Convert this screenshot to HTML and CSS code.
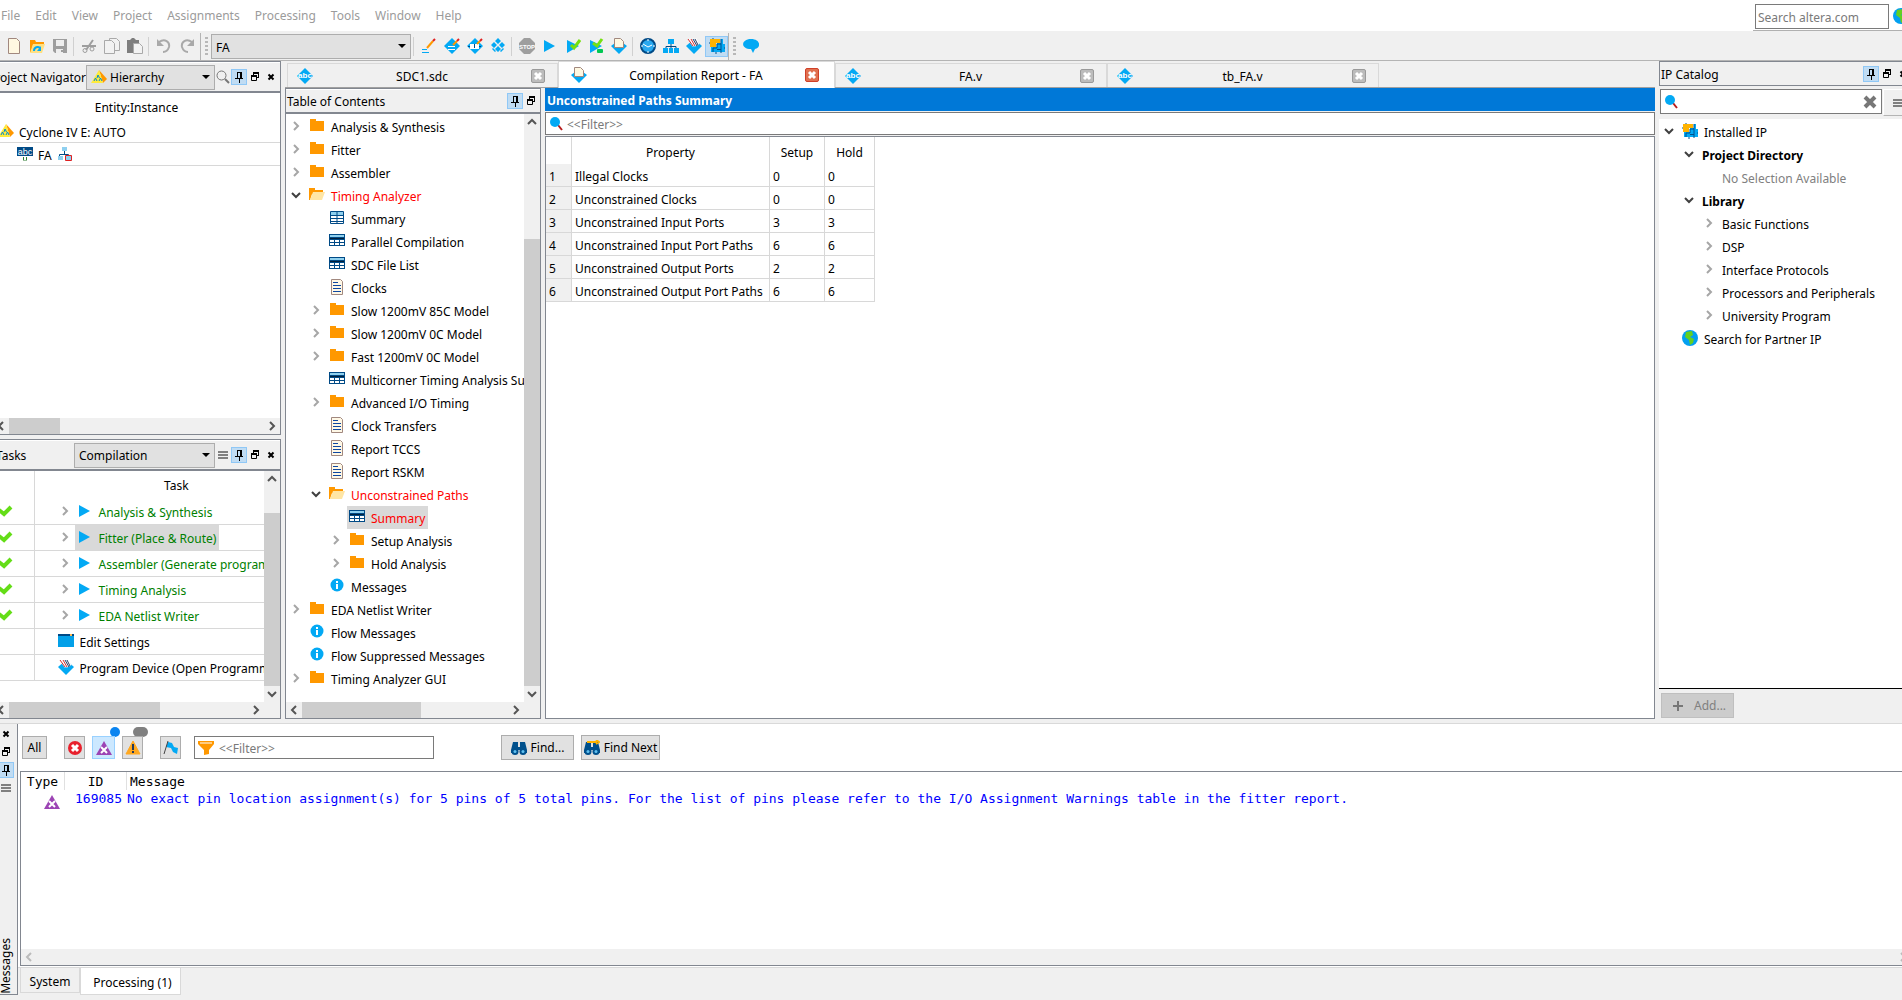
FILE: index.html
```
<!DOCTYPE html>
<html lang="en">
  <head>
    <meta charset="utf-8">
    <title>Quartus Prime - FA</title>
    <link rel="stylesheet" href="styles.css">
  </head>
  <body>
    <!-- icon set -->
    <svg class="sprite" aria-hidden="true">
      <symbol id="chev-r" viewBox="0 0 16 16"><path d="M6 4l4 4-4 4" fill="none" stroke="currentColor" stroke-width="2"/></symbol>
      <symbol id="chev-l" viewBox="0 0 16 16"><path d="M10 4L6 8l4 4" fill="none" stroke="currentColor" stroke-width="2"/></symbol>
      <symbol id="chev-d" viewBox="0 0 16 16"><path d="M4 6l4 4 4-4" fill="none" stroke="currentColor" stroke-width="2"/></symbol>
      <symbol id="chev-u" viewBox="0 0 16 16"><path d="M4 10l4-4 4 4" fill="none" stroke="currentColor" stroke-width="2"/></symbol>
      <symbol id="folder" viewBox="0 0 16 16"><path d="M1 1h6v2h8v10H1z" fill="#ff9800"/></symbol>
      <symbol id="folder-open" viewBox="0 0 16 16"><path d="M0 1h6v2h8v4H3l-2 6H0z" fill="#ff9800"/><path d="M4 5h12l-3 8H1z" fill="#ffe6a5"/></symbol>
      <symbol id="grid" viewBox="0 0 16 16"><path d="M1 2h14v12H1z" fill="#fff"/><path d="M1 2h14v3H1z" fill="#8fd0ee"/><path d="M1.500 1.500h13v12h-13zM1 5.500h14M1 8.500h14M1 11.500h14M8 2v12" fill="none" stroke="#004a86"/></symbol>
      <symbol id="grid-head" viewBox="0 0 16 16"><path d="M0 1h16v12H0z" fill="#004a86"/><path d="M1 2h14v2H1z" fill="#8fd0ee"/><path d="M1 5h14v1H1z" fill="#00203c"/><path d="M1 7h4v2H1zM6 7h4v2H6zM11 7h4v2h-4zM1 10h4v2H1zM6 10h4v2H6zM11 10h4v2h-4z" fill="#fff"/></symbol>
      <symbol id="doc" viewBox="0 0 16 16"><path d="M2.500.5h9l2 2v13h-11z" fill="#fff8e6" stroke="#a1887f"/><path d="M4 3.500h5M4 6.500h8M4 9.500h8M4 12.500h8" stroke="#0d47a1"/></symbol>
      <symbol id="info" viewBox="0 0 16 16"><circle cx="8" cy="7" r="6.500" fill="#03a9f4"/><path d="M7 3h2v2H7zM7 6h2v5H7z" fill="#fff"/></symbol>
      <symbol id="pin" viewBox="0 0 16 16"><path d="M6.500 3v6M6 3.500h4M9.500 3v6M10.500 3v6M4 9.500h8M8.500 10v4" fill="none" stroke="#000"/></symbol>
      <symbol id="restore" viewBox="0 0 16 16"><path d="M6.500 7V4M12 8.500h-2M11.500 3v6" fill="none" stroke="#000"/><path d="M6 3h6v2H6zM4 6h6v2H4z" fill="#000"/><path d="M4.500 7v4.500h5V7" fill="none" stroke="#000"/></symbol>
      <symbol id="close" viewBox="0 0 16 16"><path d="M5.500 5.500l5 5M10.500 5.500l-5 5" stroke="#000" stroke-width="2"/></symbol>
      <symbol id="lines" viewBox="0 0 16 16"><path d="M3 5h10M3 8h10M3 11h10" stroke="#808080" stroke-width="2"/></symbol>
      <symbol id="lens" viewBox="0 0 16 16"><circle cx="6.500" cy="6.500" r="4.500" fill="none" stroke="#777"/><path d="M10 10l4 4" stroke="#777" stroke-width="2"/></symbol>
      <symbol id="lens-blue" viewBox="0 0 16 16"><path d="M9 9l4 5" stroke="#b71c1c" stroke-width="2"/><circle cx="6" cy="6" r="5" fill="#03a9f4"/></symbol>
      <symbol id="project" viewBox="0 0 16 16"><path d="M8 1l8 9-4 4z" fill="#ff9800"/><path d="M8 1l4 13H0z" fill="#ffeb3b"/><path d="M3 12l1.500-3L6 12M6 9l1-3 1.500 3M8 12l1.500-3 1.500 3" fill="none" stroke="#0288d1"/></symbol>
      <symbol id="abc" viewBox="0 0 16 16"><path d="M0 1h16v9H0z" fill="#004a86"/><text x="8" y="9" font-family="Liberation Sans" font-size="9" text-anchor="middle" fill="#fff">abc</text><path d="M6.500 11v3l1 1M9.500 11v3l-1 1" fill="none" stroke="#2e7d32"/></symbol>
      <symbol id="hier" viewBox="0 0 16 16"><path d="M7.500 5v3M2.500 10V8.500h9V9" fill="none" stroke="#004a86"/><path d="M5 1h5v4H5zM1 10h5v4H1z" fill="#8fd0f0"/><path d="M8.500 9.500h6v5h-6z" fill="#8fd0f0" stroke="#e02020"/></symbol>
      <symbol id="play" viewBox="0 0 16 16"><path d="M2 2l11 6-11 6z" fill="#03a9f4"/></symbol>
      <symbol id="check" viewBox="0 0 16 16"><path d="M1 7l5 4 7-7" fill="none" stroke="#64dd17" stroke-width="4"/></symbol>
      <symbol id="window" viewBox="0 0 16 16"><path d="M0 1h16v13H0z" fill="#03a0e8"/><path d="M0 1h16v2H0z" fill="#004a86"/><path d="M12 1h2v2h-2z" fill="#ffb74d"/></symbol>
      <symbol id="programmer" viewBox="0 0 16 16"><path d="M8 1l8 7-8 8-8-8z" fill="#03a9f4"/><path d="M3 1l5 7M6 1l4 7M9 1l3 6" stroke="#fff" stroke-width="3"/><path d="M2 1l5 7M5 1l4 7" stroke="#d32f2f"/><path d="M7 1l4 7M9 1l3 6" stroke="#263c66"/></symbol>
      <symbol id="new" viewBox="0 0 16 16"><path d="M2.500.5h8l3 3v12h-11z" fill="#fff8e1" stroke="#a1887f"/></symbol>
      <symbol id="open" viewBox="0 0 16 16"><path d="M1 2h5l1 2h8v3H4l-2 7H1z" fill="#ff9800"/><path d="M4 6h12l-3 9H1z" fill="#ffe082"/><path d="M5 13c0-4 4-5 6-3" fill="none" stroke="#03a9f4" stroke-width="2"/><path d="M12 8v5H8z" fill="#03a9f4"/></symbol>
      <symbol id="save" viewBox="0 0 16 16"><path d="M1 1h14v14H3l-2-2z" fill="#9e9e9e"/><path d="M4 2h8v6H4zM4 11h7v4H4z" fill="#eee"/><path d="M9 12h2v2H9z" fill="#9e9e9e"/></symbol>
      <symbol id="cut" viewBox="0 0 16 16"><path d="M1 8h14M5 12l7-10" stroke="#9e9e9e" stroke-width="2"/><circle cx="4" cy="12.500" r="2" fill="none" stroke="#9e9e9e"/><circle cx="11" cy="11" r="2" fill="none" stroke="#9e9e9e"/></symbol>
      <symbol id="copy" viewBox="0 0 16 16"><path d="M5.500.5h7l3 3v9h-10z" fill="#f2f2f2" stroke="#a9a9a9"/><path d="M.5 2.500h7l3 3v10H.5z" fill="#f2f2f2" stroke="#a9a9a9"/></symbol>
      <symbol id="paste" viewBox="0 0 16 16"><path d="M0 2h3l2-2h2l2 2h3v13H0z" fill="#7d7d7d"/><path d="M6.500 5.500h6l3 3v7h-9z" fill="#f2f2f2" stroke="#a9a9a9"/></symbol>
      <symbol id="undo" viewBox="0 0 16 16"><path d="M3 4c6-4 11 0 10 5-1 3-3 5-6 5" fill="none" stroke="#a9a9a9" stroke-width="2"/><path d="M1 1v7h7z" fill="#a9a9a9"/></symbol>
      <symbol id="redo" viewBox="0 0 16 16"><path d="M13 4C7 0 2 4 3 9c1 3 3 5 6 5" fill="none" stroke="#a9a9a9" stroke-width="2"/><path d="M15 1v7H8z" fill="#a9a9a9"/></symbol>
      <symbol id="pencil" viewBox="0 0 16 16"><path d="M6 10l6-7" stroke="#ff9800" stroke-width="2"/><path d="M12 3l2-2" stroke="#e02020" stroke-width="2"/><path d="M1 11.500h5M1 14.500h7" stroke="#03a9f4"/></symbol>
      <symbol id="assign" viewBox="0 0 16 16"><path d="M8 0l8 8-8 8-8-8z" fill="#03a9f4"/><path d="M4 8.500h7M4 11.500h7" stroke="#fff"/><path d="M9 7l4-4" stroke="#ff9800" stroke-width="2"/><path d="M13 3l2-2" stroke="#e02020" stroke-width="2"/></symbol>
      <symbol id="pins" viewBox="0 0 16 16"><path d="M8 0l8 8-8 8-8-8z" fill="#03a9f4"/><path d="M3 6h9v5H3z" fill="#fff"/><path d="M7.500 6v4M1 8.500h2M12 8.500h2" stroke="#004a86"/><path d="M10 6l3-3" stroke="#ff9800" stroke-width="2"/><path d="M13 3l2-2" stroke="#e02020" stroke-width="2"/></symbol>
      <symbol id="chips" viewBox="0 0 16 16"><path d="M8 0l3 3-3 3-3-3zM4 4l3 3-3 3-3-3zM12 4l3 3-3 3-3-3zM8 8l3 3-3 3-3-3zM3 10l3 3-1 1-3-3zM13 10l1 1-3 3-1-1z" fill="#03a9f4"/></symbol>
      <symbol id="stop" viewBox="0 0 16 16"><path d="M5 0h6l5 5v6l-5 5H5l-5-5V5z" fill="#9e9e9e"/><text x="8" y="11" font-family="Liberation Sans" font-size="6" font-weight="bold" text-anchor="middle" fill="#fff">STOP</text></symbol>
      <symbol id="play-check" viewBox="0 0 16 16"><path d="M2 2l12 6-12 7z" fill="#03a9f4"/><path d="M6 7l3 3 6-8" fill="none" stroke="#76e010" stroke-width="3"/></symbol>
      <symbol id="play-chip" viewBox="0 0 16 16"><path d="M2 2l12 6-12 7z" fill="#03a9f4"/><path d="M5 5l4 3 5-7" fill="none" stroke="#76e010" stroke-width="3"/><rect x="9" y="11" width="6" height="4" rx="1" fill="#00c853"/></symbol>
      <symbol id="report" viewBox="0 0 16 16"><path d="M0 8l4-3h8l4 3-8 8z" fill="#03a9f4"/><path d="M3.500.5h6l3 3v6h-9z" fill="#fff8e1" stroke="#a1887f"/></symbol>
      <symbol id="clock" viewBox="0 0 16 16"><circle cx="8" cy="8" r="7" fill="#29a9f0" stroke="#004a86" stroke-width="2"/><path d="M3 6l5 3 4-2" fill="none" stroke="#fff"/><path d="M8 1v2M8 13v2M1 8h2M13 8h2" stroke="#fff"/></symbol>
      <symbol id="tree" viewBox="0 0 16 16"><path d="M8 6v4M3 11V8.500h10V11" fill="none" stroke="#004a86"/><path d="M5 1h6v5H5zM0 10h5v5H0zM6 10h4v5H6zM11 10h5v5h-5z" fill="#03a9f4"/></symbol>
      <symbol id="chip" viewBox="0 0 16 16"><path d="M12 1h2v5h2v8H2v-5h6V5h4z" fill="#03a9f4"/><path d="M1 1h10v4H7v4H1z" fill="#ffb300"/><path d="M4 14v-4h4V6h4V1M12 6v9M8 11.500h4M4 0v1M0 5h1M7 14v2M15 10h1" fill="none" stroke="#00508c"/></symbol>
      <symbol id="bubble" viewBox="0 0 16 16"><path d="M8 1c10 0 10 9 4 10l-2 4-2-4C-3 11-2 1 8 1z" fill="#03a9f4"/></symbol>
      <symbol id="globe" viewBox="0 0 16 16"><circle cx="8" cy="8" r="8" fill="#03a0f0"/><path d="M4 2l6-1 1 4-3 2 4 2-1 4-3 2-1-5-4-3z" fill="#64d020"/></symbol>
      <symbol id="diamond-abc" viewBox="0 0 16 16"><path d="M8 0l8 8-8 8-8-8z" fill="#03a9f4"/><text x="8" y="10" font-family="Liberation Sans" font-size="8" font-weight="bold" text-anchor="middle" fill="#fff">abc</text></symbol>
      <symbol id="error" viewBox="0 0 16 16"><circle cx="8" cy="8" r="7" fill="#e8202c"/><path d="M5 5l6 6M11 5l-6 6" stroke="#fff" stroke-width="3"/></symbol>
      <symbol id="critical" viewBox="0 0 16 16"><path d="M8 1l8 14H0z" fill="#9c44b4"/><path d="M5 7l6 6M11 7l-6 6" stroke="#fff" stroke-width="2"/></symbol>
      <symbol id="warning" viewBox="0 0 16 16"><path d="M8 1l7 13H1z" fill="#ffa820" stroke="#ffa820" stroke-linejoin="round"/><path d="M7 4h2v6H7zM7 11h2v2H7z" fill="#223a5e"/></symbol>
      <symbol id="flag" viewBox="0 0 16 16"><path d="M5 2l4 1 2 4 4 1-1 6-4-2-2-4-5-1z" fill="#03a9f4"/><path d="M5 1L1 14" stroke="#444"/></symbol>
      <symbol id="funnel" viewBox="0 0 16 16"><path d="M0 1h16v3l-5 6v4l-5 1v-5L0 4z" fill="#ff9800"/><path d="M2 3h12" stroke="#fff"/></symbol>
      <symbol id="binoc" viewBox="0 0 16 16"><path d="M2 2h5v5h2V2h5l2 8v3h-6v-3H6v3H0v-3z" fill="#00508c"/><circle cx="4" cy="11.500" r="3.500" fill="#00508c"/><circle cx="12" cy="11.500" r="3.500" fill="#00508c"/><circle cx="4" cy="11.500" r="1.500" fill="#5fc0f0"/><circle cx="12" cy="11.500" r="1.500" fill="#5fc0f0"/></symbol>
      <symbol id="binoc-next" viewBox="0 0 16 16"><use href="#binoc"/><path d="M3 2h10M12 0l3 2-3 2" fill="none" stroke="#ffb300" stroke-width="2"/></symbol>
      <symbol id="tab-x" viewBox="0 0 16 16"><path d="M4 4l8 8M12 4l-8 8" stroke="#fff" stroke-width="4"/></symbol>
      <symbol id="clear" viewBox="0 0 16 16"><path d="M3 3l10 10M13 3L3 13" stroke="#777" stroke-width="4"/></symbol>
      <symbol id="plus" viewBox="0 0 16 16"><path d="M8 3v10M3 8h10" stroke="#777" stroke-width="2"/></symbol>
    </svg>

    <div class="app">
      <div class="menubar">
        <nav class="menu">
          <a href="#">File</a><a href="#">Edit</a><a href="#">View</a><a href="#">Project</a><a href="#">Assignments</a><a href="#">Processing</a><a href="#">Tools</a><a href="#">Window</a><a href="#">Help</a>
        </nav>
        <div class="site-search">
          <input type="text" placeholder="Search altera.com" aria-label="Search altera.com">
          <button class="tool" aria-label="Search the web"><svg><use href="#globe"/></svg></button>
        </div>
      </div>

      <div class="toolbar">
        <div class="tools tools-file">
          <button class="tool" aria-label="New"><svg><use href="#new"/></svg></button>
          <button class="tool" aria-label="Open"><svg><use href="#open"/></svg></button>
          <button class="tool" aria-label="Save"><svg><use href="#save"/></svg></button>
          <span class="sep"></span>
          <button class="tool" aria-label="Cut"><svg><use href="#cut"/></svg></button>
          <button class="tool" aria-label="Copy"><svg><use href="#copy"/></svg></button>
          <button class="tool" aria-label="Paste"><svg><use href="#paste"/></svg></button>
          <span class="sep"></span>
          <button class="tool" aria-label="Undo"><svg><use href="#undo"/></svg></button>
          <button class="tool" aria-label="Redo"><svg><use href="#redo"/></svg></button>
        </div>
        <div class="tools">
          <span class="grip"></span>
          <div class="combo combo-revision"><select aria-label="Revision"><option>FA</option></select></div>
          <span class="sep"></span>
          <button class="tool" aria-label="Settings"><svg><use href="#pencil"/></svg></button>
          <button class="tool" aria-label="Assignment Editor"><svg><use href="#assign"/></svg></button>
          <button class="tool" aria-label="Pin Planner"><svg><use href="#pins"/></svg></button>
          <button class="tool" aria-label="Chip Planner"><svg><use href="#chips"/></svg></button>
          <span class="sep"></span>
          <button class="tool" aria-label="Stop"><svg><use href="#stop"/></svg></button>
          <button class="tool" aria-label="Start Compilation"><svg><use href="#play"/></svg></button>
          <button class="tool" aria-label="Start Analysis"><svg><use href="#play-check"/></svg></button>
          <button class="tool" aria-label="Start I/O Analysis"><svg><use href="#play-chip"/></svg></button>
          <button class="tool" aria-label="Report"><svg><use href="#report"/></svg></button>
          <span class="sep"></span>
          <button class="tool" aria-label="Timing Analyzer"><svg><use href="#clock"/></svg></button>
          <button class="tool" aria-label="Netlist"><svg><use href="#tree"/></svg></button>
          <button class="tool" aria-label="Programmer"><svg><use href="#programmer"/></svg></button>
          <button class="tool pressed" aria-label="IP Catalog"><svg><use href="#chip"/></svg></button>
        </div>
        <div class="tools tools-last">
          <span class="grip"></span>
          <button class="tool" aria-label="Feedback"><svg><use href="#bubble"/></svg></button>
        </div>
      </div>

      <div class="main">
        <div class="side">
          <section class="panel navigator">
            <header class="panel-head tall">
              <label for="nav-view">Project Navigator</label>
              <div class="combo combo-nav"><svg><use href="#project"/></svg><select id="nav-view"><option>Hierarchy</option></select></div>
              <button class="mini" aria-label="Find"><svg><use href="#lens"/></svg></button>
              <button class="mini pressed" aria-label="Pin"><svg><use href="#pin"/></svg></button>
              <button class="mini" aria-label="Float"><svg><use href="#restore"/></svg></button>
              <button class="mini" aria-label="Close"><svg><use href="#close"/></svg></button>
            </header>
            <div class="col-head">Entity:Instance</div>
            <div class="entity"><svg><use href="#project"/></svg>Cyclone IV E: AUTO</div>
            <div class="entity child"><svg><use href="#abc"/></svg>FA<svg><use href="#hier"/></svg></div>
            <div class="fill"></div>
            <div class="hbar"><svg><use href="#chev-l"/></svg><div class="track"><div class="thumb" style="width: 20%"></div></div><svg><use href="#chev-r"/></svg></div>
          </section>

          <section class="panel tasks">
            <header class="panel-head tall">
              <label for="task-flow">Tasks</label>
              <div class="combo combo-flow"><select id="task-flow"><option>Compilation</option></select></div>
              <button class="mini" aria-label="Menu"><svg><use href="#lines"/></svg></button>
              <button class="mini pressed" aria-label="Pin"><svg><use href="#pin"/></svg></button>
              <button class="mini" aria-label="Float"><svg><use href="#restore"/></svg></button>
              <button class="mini" aria-label="Close"><svg><use href="#close"/></svg></button>
            </header>
            <div class="scroller">
              <div class="view">
                <table class="task-table">
                  <tr><th class="status"></th><th>Task</th></tr>
                  <tr><td class="status"><svg><use href="#check"/></svg></td><td><div class="task"><button class="twist" aria-label="Expand"><svg><use href="#chev-r"/></svg></button><span class="pick"><svg><use href="#play"/></svg>Analysis &amp; Synthesis</span></div></td></tr>
                  <tr><td class="status"><svg><use href="#check"/></svg></td><td><div class="task"><button class="twist" aria-label="Expand"><svg><use href="#chev-r"/></svg></button><span class="pick selected"><svg><use href="#play"/></svg>Fitter (Place &amp; Route)</span></div></td></tr>
                  <tr><td class="status"><svg><use href="#check"/></svg></td><td><div class="task"><button class="twist" aria-label="Expand"><svg><use href="#chev-r"/></svg></button><span class="pick"><svg><use href="#play"/></svg>Assembler (Generate programming files)</span></div></td></tr>
                  <tr><td class="status"><svg><use href="#check"/></svg></td><td><div class="task"><button class="twist" aria-label="Expand"><svg><use href="#chev-r"/></svg></button><span class="pick"><svg><use href="#play"/></svg>Timing Analysis</span></div></td></tr>
                  <tr><td class="status"><svg><use href="#check"/></svg></td><td><div class="task"><button class="twist" aria-label="Expand"><svg><use href="#chev-r"/></svg></button><span class="pick"><svg><use href="#play"/></svg>EDA Netlist Writer</span></div></td></tr>
                  <tr><td class="status"></td><td><div class="task plain"><span class="pick"><svg><use href="#window"/></svg>Edit Settings</span></div></td></tr>
                  <tr><td class="status"></td><td><div class="task plain"><span class="pick"><svg><use href="#programmer"/></svg>Program Device (Open Programmer)</span></div></td></tr>
                </table>
              </div>
              <div class="vbar"><svg><use href="#chev-u"/></svg><div class="track"><div class="thumb" style="margin-top: 26px"></div></div><svg><use href="#chev-d"/></svg></div>
            </div>
            <div class="hbar corner"><svg><use href="#chev-l"/></svg><div class="track"><div class="thumb" style="width: 63%"></div></div><svg><use href="#chev-r"/></svg></div>
          </section>
        </div>

        <div class="workspace">
          <div class="tabs">
            <div class="tab"><svg><use href="#diamond-abc"/></svg><span>SDC1.sdc</span><button class="tab-close" aria-label="Close tab"><svg><use href="#tab-x"/></svg></button></div>
            <div class="tab active"><svg><use href="#report"/></svg><span>Compilation Report - FA</span><button class="tab-close" aria-label="Close tab"><svg><use href="#tab-x"/></svg></button></div>
            <div class="tab"><svg><use href="#diamond-abc"/></svg><span>FA.v</span><button class="tab-close" aria-label="Close tab"><svg><use href="#tab-x"/></svg></button></div>
            <div class="tab"><svg><use href="#diamond-abc"/></svg><span>tb_FA.v</span><button class="tab-close" aria-label="Close tab"><svg><use href="#tab-x"/></svg></button></div>
          </div>

          <div class="report">
            <section class="panel toc">
              <header class="panel-head">
                <span class="title">Table of Contents</span>
                <button class="mini pressed" aria-label="Pin"><svg><use href="#pin"/></svg></button>
                <button class="mini" aria-label="Float"><svg><use href="#restore"/></svg></button>
              </header>
              <div class="scroller">
                <div class="view">
                  <ul class="tree">
                    <li><button class="twist" aria-label="Expand"><svg><use href="#chev-r"/></svg></button><span class="item"><svg><use href="#folder"/></svg>Analysis &amp; Synthesis</span></li>
                    <li><button class="twist" aria-label="Expand"><svg><use href="#chev-r"/></svg></button><span class="item"><svg><use href="#folder"/></svg>Fitter</span></li>
                    <li><button class="twist" aria-label="Expand"><svg><use href="#chev-r"/></svg></button><span class="item"><svg><use href="#folder"/></svg>Assembler</span></li>
                    <li><button class="twist open" aria-label="Collapse"><svg><use href="#chev-d"/></svg></button><span class="item alert"><svg><use href="#folder-open"/></svg>Timing Analyzer</span></li>
                    <li class="l1 leaf"><span class="item"><svg><use href="#grid"/></svg>Summary</span></li>
                    <li class="l1 leaf"><span class="item"><svg><use href="#grid-head"/></svg>Parallel Compilation</span></li>
                    <li class="l1 leaf"><span class="item"><svg><use href="#grid-head"/></svg>SDC File List</span></li>
                    <li class="l1 leaf"><span class="item"><svg><use href="#doc"/></svg>Clocks</span></li>
                    <li class="l1"><button class="twist" aria-label="Expand"><svg><use href="#chev-r"/></svg></button><span class="item"><svg><use href="#folder"/></svg>Slow 1200mV 85C Model</span></li>
                    <li class="l1"><button class="twist" aria-label="Expand"><svg><use href="#chev-r"/></svg></button><span class="item"><svg><use href="#folder"/></svg>Slow 1200mV 0C Model</span></li>
                    <li class="l1"><button class="twist" aria-label="Expand"><svg><use href="#chev-r"/></svg></button><span class="item"><svg><use href="#folder"/></svg>Fast 1200mV 0C Model</span></li>
                    <li class="l1 leaf"><span class="item"><svg><use href="#grid-head"/></svg>Multicorner Timing Analysis Summary</span></li>
                    <li class="l1"><button class="twist" aria-label="Expand"><svg><use href="#chev-r"/></svg></button><span class="item"><svg><use href="#folder"/></svg>Advanced I/O Timing</span></li>
                    <li class="l1 leaf"><span class="item"><svg><use href="#doc"/></svg>Clock Transfers</span></li>
                    <li class="l1 leaf"><span class="item"><svg><use href="#doc"/></svg>Report TCCS</span></li>
                    <li class="l1 leaf"><span class="item"><svg><use href="#doc"/></svg>Report RSKM</span></li>
                    <li class="l1"><button class="twist open" aria-label="Collapse"><svg><use href="#chev-d"/></svg></button><span class="item alert"><svg><use href="#folder-open"/></svg>Unconstrained Paths</span></li>
                    <li class="l2 leaf"><span class="item alert selected"><svg><use href="#grid-head"/></svg>Summary</span></li>
                    <li class="l2"><button class="twist" aria-label="Expand"><svg><use href="#chev-r"/></svg></button><span class="item"><svg><use href="#folder"/></svg>Setup Analysis</span></li>
                    <li class="l2"><button class="twist" aria-label="Expand"><svg><use href="#chev-r"/></svg></button><span class="item"><svg><use href="#folder"/></svg>Hold Analysis</span></li>
                    <li class="l1 leaf"><span class="item"><svg><use href="#info"/></svg>Messages</span></li>
                    <li><button class="twist" aria-label="Expand"><svg><use href="#chev-r"/></svg></button><span class="item"><svg><use href="#folder"/></svg>EDA Netlist Writer</span></li>
                    <li class="leaf"><span class="item"><svg><use href="#info"/></svg>Flow Messages</span></li>
                    <li class="leaf"><span class="item"><svg><use href="#info"/></svg>Flow Suppressed Messages</span></li>
                    <li><button class="twist" aria-label="Expand"><svg><use href="#chev-r"/></svg></button><span class="item"><svg><use href="#folder"/></svg>Timing Analyzer GUI</span></li>
                  </ul>
                </div>
                <div class="vbar"><svg><use href="#chev-u"/></svg><div class="track"><div class="thumb" style="margin-top: 109px"></div></div><svg><use href="#chev-d"/></svg></div>
              </div>
              <div class="hbar corner"><svg><use href="#chev-l"/></svg><div class="track"><div class="thumb" style="width: 58%"></div></div><svg><use href="#chev-r"/></svg></div>
            </section>

            <section class="summary">
              <h2>Unconstrained Paths Summary</h2>
              <div class="filter"><svg><use href="#lens-blue"/></svg><input type="text" placeholder="&lt;&lt;Filter&gt;&gt;" aria-label="Filter report"></div>
              <div class="sheet">
                <table class="paths">
                  <thead>
                    <tr><th class="num"></th><th class="prop">Property</th><th class="setup">Setup</th><th class="hold">Hold</th></tr>
                  </thead>
                  <tbody>
                    <tr><td class="num">1</td><td>Illegal Clocks</td><td>0</td><td>0</td></tr>
                    <tr><td class="num">2</td><td>Unconstrained Clocks</td><td>0</td><td>0</td></tr>
                    <tr><td class="num">3</td><td>Unconstrained Input Ports</td><td>3</td><td>3</td></tr>
                    <tr><td class="num">4</td><td>Unconstrained Input Port Paths</td><td>6</td><td>6</td></tr>
                    <tr><td class="num">5</td><td>Unconstrained Output Ports</td><td>2</td><td>2</td></tr>
                    <tr><td class="num">6</td><td>Unconstrained Output Port Paths</td><td>6</td><td>6</td></tr>
                  </tbody>
                </table>
              </div>
            </section>
          </div>
        </div>

        <section class="catalog">
          <header class="catalog-head">
            <span class="title">IP Catalog</span>
            <button class="mini pressed" aria-label="Pin"><svg><use href="#pin"/></svg></button>
            <button class="mini" aria-label="Float"><svg><use href="#restore"/></svg></button>
            <button class="mini" aria-label="Close"><svg><use href="#close"/></svg></button>
          </header>
          <div class="catalog-search">
            <div class="filter"><svg><use href="#lens-blue"/></svg><input type="text" aria-label="Search IP"><svg><use href="#clear"/></svg></div>
            <button class="catalog-menu" aria-label="Options"><svg><use href="#lines"/></svg></button>
          </div>
          <ul class="tree catalog-tree">
            <li><button class="twist open" aria-label="Collapse"><svg><use href="#chev-d"/></svg></button><span class="item"><svg><use href="#chip"/></svg>Installed IP</span></li>
            <li class="l1"><button class="twist open" aria-label="Collapse"><svg><use href="#chev-d"/></svg></button><span class="item bold">Project Directory</span></li>
            <li class="l2 leaf"><span class="item muted">No Selection Available</span></li>
            <li class="l1"><button class="twist open" aria-label="Collapse"><svg><use href="#chev-d"/></svg></button><span class="item bold">Library</span></li>
            <li class="l2"><button class="twist" aria-label="Expand"><svg><use href="#chev-r"/></svg></button><span class="item">Basic Functions</span></li>
            <li class="l2"><button class="twist" aria-label="Expand"><svg><use href="#chev-r"/></svg></button><span class="item">DSP</span></li>
            <li class="l2"><button class="twist" aria-label="Expand"><svg><use href="#chev-r"/></svg></button><span class="item">Interface Protocols</span></li>
            <li class="l2"><button class="twist" aria-label="Expand"><svg><use href="#chev-r"/></svg></button><span class="item">Processors and Peripherals</span></li>
            <li class="l2"><button class="twist" aria-label="Expand"><svg><use href="#chev-r"/></svg></button><span class="item">University Program</span></li>
            <li class="leaf"><span class="item"><svg><use href="#globe"/></svg>Search for Partner IP</span></li>
          </ul>
          <div class="catalog-foot"><button class="add" disabled><svg><use href="#plus"/></svg>Add...</button></div>
        </section>
      </div>

      <section class="messages">
        <div class="strip">
          <button class="mini" aria-label="Close"><svg><use href="#close"/></svg></button>
          <button class="mini" aria-label="Float"><svg><use href="#restore"/></svg></button>
          <button class="mini pressed" aria-label="Pin"><svg><use href="#pin"/></svg></button>
          <button class="mini" aria-label="Menu"><svg><use href="#lines"/></svg></button>
          <span class="strip-title">Messages</span>
        </div>
        <div class="messages-body">
          <div class="msg-tools">
            <button class="flat all">All</button>
            <button class="flat" aria-label="Errors"><svg><use href="#error"/></svg></button>
            <div class="counted"><span class="count"></span><button class="flat on" aria-label="Critical warnings"><svg><use href="#critical"/></svg></button></div>
            <div class="counted"><span class="count grey"></span><button class="flat" aria-label="Warnings"><svg><use href="#warning"/></svg></button></div>
            <button class="flat flagged" aria-label="Flagged"><svg><use href="#flag"/></svg></button>
            <div class="filter msg-filter"><svg><use href="#funnel"/></svg><input type="text" placeholder="&lt;&lt;Filter&gt;&gt;" aria-label="Filter messages"></div>
            <button class="flat find"><svg><use href="#binoc"/></svg>Find...</button>
            <button class="flat find-next"><svg><use href="#binoc-next"/></svg>Find Next</button>
          </div>
          <div class="msg-list">
            <table>
              <thead>
                <tr><th class="type">Type</th><th class="id">ID</th><th class="text">Message</th></tr>
              </thead>
              <tbody>
                <tr><td class="type"><svg><use href="#critical"/></svg></td><td class="id">169085</td><td class="text">No exact pin location assignment(s) for 5 pins of 5 total pins. For the list of pins please refer to the I/O Assignment Warnings table in the fitter report.</td></tr>
              </tbody>
            </table>
            <div class="fill"></div>
            <div class="hbar off"><svg><use href="#chev-l"/></svg><div class="track"></div><svg><use href="#chev-r"/></svg></div>
          </div>
          <div class="msg-tabs">
            <button class="msg-tab">System</button>
            <button class="msg-tab active">Processing (1)</button>
          </div>
        </div>
      </section>
    </div>
  </body>
</html>
```
FILE: styles.css
```
* {
  box-sizing: border-box;
}

body {
  margin: 0;
  overflow: hidden;
  background-color: #f0f0f0;
  color: #000;
  font-family: "Noto Sans", "Open Sans", sans-serif;
  font-size: 12px;
  line-height: 18px;
}

button, input, select {
  margin: 0;
  padding: 0;
  border: none;
  border-radius: 0;
  background: none;
  color: inherit;
  font: inherit;
}

svg {
  display: block;
  flex: none;
  width: 16px;
  height: 16px;
}

.sprite {
  display: none;
}

/* the window is maximized a little past both screen edges */
.app {
  display: flex;
  flex-direction: column;
  height: 100vh;
  margin: 0 -10px 0 -8px;
}

.fill {
  flex: 1;
}

/* menu bar */
.menubar {
  display: flex;
  justify-content: space-between;
  height: 33px;
  background-color: #fff;
  border-bottom: 2px solid #f0f0f0;
}

.menu {
  display: flex;
  align-items: center;
  padding-left: 2px;
}

.menu a {
  padding: 0 8px 0 7px;
  color: #9b9b9b;
  text-decoration: none;
}

.site-search {
  display: flex;
  align-items: center;
  padding: 3px 0 0 2px;
  border-bottom: 1px solid #b0b0b0;
}

.site-search input {
  width: 134px;
  height: 25px;
  padding: 2px 2px 0;
  border: 1px solid #7a7a7a;
}

input::placeholder {
  color: #7a7a7a;
  opacity: 1;
}

/* toolbar */
.toolbar {
  display: flex;
  height: 28px;
  border-bottom: 1px solid #b4b4b4;
}

.tools {
  display: flex;
  align-items: center;
  border-right: 1px solid #b4b4b4;
}

.tools-file {
  width: 209px;
  padding-left: 10px;
}

.tools-last {
  border-right: none;
}

.tool {
  display: flex;
  align-items: center;
  justify-content: center;
  width: 23px;
  height: 21px;
  padding-bottom: 1px;
}

.pressed {
  background-color: #c0dcf3;
  outline: 1px solid #90c8f6;
  outline-offset: -1px;
}

.sep {
  width: 1px;
  height: 19px;
  margin: 0 3px 0 2px;
  background-color: #d0d0d0;
}

.grip {
  width: 3px;
  height: 20px;
  margin: 0 3px 0 4px;
  background: repeating-linear-gradient(#b8b8b8 0 2px, transparent 2px 4px);
}

.combo {
  position: relative;
  flex: none;
  height: 25px;
}

.combo select {
  width: 100%;
  height: 100%;
  padding: 2px 20px 0 4px;
  appearance: none;
  background-color: #e1e1e1;
  border: 1px solid #adadad;
}

.combo::after {
  content: "";
  position: absolute;
  top: 10px;
  right: 5px;
  border: 4px solid transparent;
  border-top-color: #000;
  border-bottom: none;
}

.combo svg {
  position: absolute;
  top: 4px;
  left: 5px;
}

.combo-revision {
  width: 200px;
}

.combo-nav {
  width: 129px;
}

.combo-nav select {
  padding-left: 23px;
}

.combo-flow {
  width: 141px;
}

/* docked panels */
.main {
  display: grid;
  grid-template-columns: 289px minmax(0, 1fr) 253px;
  gap: 4px;
  flex: 1;
  min-height: 0;
  padding-bottom: 4px;
}

.side {
  display: flex;
  flex-direction: column;
  gap: 4px;
  min-height: 0;
}

.panel {
  display: flex;
  flex-direction: column;
  min-height: 0;
  background-color: #fff;
  border: 1px solid #828790;
}

.navigator {
  flex: 1;
}

.tasks {
  height: 280px;
}

.panel-head {
  display: flex;
  flex: none;
  align-items: center;
  height: 25px;
  padding: 0 1px;
  background-color: #f0f0f0;
  border-top: 1px solid #fff;
  border-bottom: 2px solid #828790;
}

.panel-head.tall {
  height: 31px;
  padding-left: 3px;
}

.panel-head label {
  flex: 1;
  min-width: 0;
  padding-top: 2px;
  white-space: nowrap;
}

.navigator label {
  display: flex;
  justify-content: flex-end;
}

.title {
  flex: 1;
  padding-top: 2px;
}

.mini {
  display: flex;
  flex: none;
  width: 16px;
  height: 16px;
}

.col-head {
  height: 27px;
  line-height: 30px;
  text-align: center;
}

.entity {
  display: flex;
  align-items: center;
  gap: 5px;
  height: 23px;
  padding: 3px 0 0 5px;
  border-bottom: 1px solid #d8d8d8;
}

.entity.child {
  padding-left: 24px;
}

.entity svg {
  margin-bottom: 4px;
}

.scroller {
  display: flex;
  flex: 1;
  min-height: 0;
}

.view {
  flex: 1;
  min-width: 0;
  overflow: hidden;
}

.vbar {
  display: flex;
  flex-direction: column;
  width: 16px;
  background-color: #f0f0f0;
  color: #555;
}

.hbar {
  display: flex;
  flex: none;
  height: 16px;
  background-color: #f0f0f0;
  color: #555;
}

.hbar.corner {
  padding-right: 16px;
}

.hbar.off {
  color: #bbb;
}

.track {
  display: flex;
  flex: 1;
}

.thumb {
  background-color: #cdcdcd;
}

.vbar .thumb {
  width: 100%;
}

.task-table {
  width: 120%;
  table-layout: fixed;
  border-collapse: collapse;
}

.task-table th {
  height: 27px;
  padding: 3px 0 0;
  font-weight: normal;
}

.task-table td {
  height: 26px;
  padding: 0;
  border-bottom: 1px solid #d8d8d8;
}

.task-table .status {
  width: 41px;
  padding-left: 5px;
  border-right: 1px solid #d8d8d8;
}

.task {
  display: flex;
  align-items: center;
  height: 25px;
  padding-left: 22px;
  color: #008000;
  white-space: nowrap;
}

.task.plain {
  padding-left: 19px;
  color: #000;
}

.pick {
  display: flex;
  align-items: center;
  gap: 6px;
  height: 25px;
  margin-left: 2px;
  padding: 4px 3px 0 2px;
}

.pick svg {
  margin-bottom: 4px;
}

.selected {
  background-color: #d9d9d9;
}

/* trees */
.tree {
  margin: 0;
  padding: 1px 0 0 2px;
  list-style: none;
}

.tree li {
  display: flex;
  align-items: center;
  height: 23px;
  white-space: nowrap;
}

.tree .leaf {
  padding-left: 16px;
}

.tree .l1 {
  padding-left: 20px;
}

.tree .l1.leaf {
  padding-left: 36px;
}

.tree .l2 {
  padding-left: 40px;
}

.tree .l2.leaf {
  padding-left: 56px;
}

.twist {
  width: 16px;
  height: 16px;
  color: #a6a6a6;
}

.twist.open {
  color: #404040;
}

.tree .twist {
  margin-bottom: 2px;
}

.item {
  display: flex;
  align-items: center;
  gap: 6px;
  height: 23px;
  margin-left: 3px;
  padding: 2px 3px 0 2px;
}

.item svg {
  margin-bottom: 3px;
}

.alert {
  color: #f00;
}

.bold {
  font-weight: bold;
}

.muted {
  color: #808080;
}

/* document tabs */
.workspace {
  display: flex;
  flex-direction: column;
  min-height: 0;
}

.tabs {
  display: flex;
  align-items: flex-end;
  flex: none;
  height: 27px;
  padding-left: 2px;
  border-bottom: 1px solid #a0a0a0;
}

.tab {
  display: flex;
  align-items: center;
  width: 272px;
  height: 24px;
  padding: 0 12px 0 9px;
  border: 1px solid #d9d9d9;
  border-bottom: none;
}

.tab:first-child {
  width: 271px;
}

.tab.active {
  width: 277px;
  height: 27px;
  margin-bottom: -1px;
  padding: 0 15px 0 12px;
  background-color: #fff;
}

.tab span {
  flex: 1;
  padding-top: 2px;
  text-align: center;
}

.tab-close {
  display: flex;
  align-items: center;
  justify-content: center;
  width: 14px;
  height: 14px;
  background-color: #bcbcbc;
  border: 1px solid #9a9a9a;
  border-radius: 2px;
}

.tab-close svg {
  width: 12px;
  height: 12px;
}

.active .tab-close {
  background-color: #e07050;
  border-color: #d04028;
}

.report {
  display: grid;
  grid-template-columns: 256px minmax(0, 1fr);
  gap: 4px;
  flex: 1;
  min-height: 0;
}

.summary {
  display: flex;
  flex-direction: column;
  gap: 1px;
}

.summary h2 {
  height: 23px;
  margin: 0;
  padding-left: 2px;
  background-color: #0078d7;
  color: #fff;
  font-size: 12px;
  line-height: 26px;
}

.filter {
  display: flex;
  align-items: center;
  height: 23px;
  padding: 0 3px;
  background-color: #fff;
  border: 1px solid #7a7a7a;
}

.filter input {
  flex: 1;
  min-width: 0;
  padding: 2px 2px 0;
  outline: none;
}

.sheet {
  flex: 1;
  background-color: #fff;
  border: 1px solid #828790;
}

.paths {
  table-layout: fixed;
  width: 329px;
  border-collapse: separate;
  border-spacing: 0;
}

.paths th, .paths td {
  padding: 4px 3px 0;
  border-right: 1px solid #d8d8d8;
  text-align: left;
}

.paths th {
  height: 27px;
  font-weight: normal;
  text-align: center;
}

.paths td {
  height: 23px;
  border-bottom: 1px solid #d8d8d8;
}

.paths .num {
  width: 26px;
}

.paths td.num {
  background-color: #f0f0f0;
}

.paths .prop {
  width: 198px;
}

.paths .setup {
  width: 55px;
}

/* IP catalog */
.catalog {
  display: flex;
  flex-direction: column;
}

.catalog-head {
  display: flex;
  align-items: center;
  height: 25px;
  padding-left: 1px;
  border: 1px solid #828790;
}

.catalog-search {
  display: flex;
  gap: 1px;
  padding: 3px 0 3px 1px;
}

.catalog-search .filter {
  width: 222px;
  height: 25px;
}

.catalog-menu {
  display: flex;
  align-items: center;
  justify-content: center;
  flex: 1;
  height: 27px;
  border: 1px solid #fff;
  border-bottom-color: #b4b4b4;
}

.catalog-tree {
  flex: 1;
  background-color: #fff;
  border-bottom: 1px solid #000;
}

.catalog-foot {
  padding: 4px 2px 1px;
}

.add {
  display: flex;
  align-items: center;
  gap: 8px;
  width: 73px;
  height: 25px;
  padding: 1px 8px 0;
  background-color: #ccc;
  border: 1px solid #bfbfbf;
  color: #808080;
}

/* messages */
.messages {
  display: flex;
  flex: none;
  height: 277px;
  border-top: 1px solid #d9d9d9;
}

.strip {
  display: flex;
  flex-direction: column;
  align-items: center;
  gap: 2px;
  width: 26px;
  height: 271px;
  padding: 2px 0 0 2px;
  border-right: 1px solid #828790;
  border-bottom: 1px solid #828790;
}

.strip-title {
  margin-top: auto;
  transform: rotate(180deg);
  writing-mode: vertical-rl;
}

.messages-body {
  display: flex;
  flex: 1;
  flex-direction: column;
  min-width: 0;
  background-color: #fff;
}

.msg-tools {
  display: flex;
  align-items: center;
  height: 47px;
  padding: 0 4px;
}

.flat {
  display: flex;
  align-items: center;
  justify-content: center;
  min-width: 21px;
  height: 23px;
  background-color: #e1e1e1;
  border: 1px solid #adadad;
}

.flat.all {
  width: 25px;
  margin-right: 17px;
}

.flat.on {
  width: 23px;
  background-color: #cce8ff;
  border-color: #99d1ff;
}

.counted {
  position: relative;
  margin-left: 7px;
}

.counted .flat {
  position: relative;
}

.count {
  position: absolute;
  top: -9px;
  right: -5px;
  width: 10px;
  height: 10px;
  border-radius: 5px;
  background-color: #0a84f0;
}

.count.grey {
  width: 15px;
  background-color: #808080;
}

.flat.flagged {
  margin-left: 17px;
}

.msg-filter {
  width: 240px;
  margin: 0 67px 0 13px;
}

.msg-filter input {
  padding-left: 5px;
}

.flat.find, .flat.find-next {
  gap: 4px;
  height: 25px;
  padding-top: 1px;
}

.flat.find {
  width: 73px;
  margin-right: 7px;
}

.flat.find-next {
  width: 79px;
}

.msg-list {
  display: flex;
  flex: 1;
  flex-direction: column;
  margin: 0 0 1px 2px;
  overflow: hidden;
  border: 1px solid #828790;
  font-family: "DejaVu Sans Mono", monospace;
  font-size: 13px;
}

.msg-list table {
  table-layout: fixed;
  width: 100%;
  border-spacing: 0;
  line-height: 16px;
}

.msg-list th {
  height: 18px;
  padding: 2px 3px 0;
  border-right: 1px solid #e0e0e0;
  font-weight: normal;
}

.msg-list td {
  height: 18px;
  padding: 0;
  color: #00f;
}

.msg-list .type {
  width: 44px;
}

.msg-list td.type {
  padding: 4px 0 0 23px;
}

.msg-list .id {
  width: 62px;
}

.msg-list td.id {
  padding-right: 5px;
  text-align: right;
}

.msg-list .text {
  border-right: none;
  text-align: left;
  vertical-align: top;
  white-space: nowrap;
}

.msg-list td.id, .msg-list td.text {
  padding-top: 1px;
  vertical-align: top;
}

.msg-tabs {
  display: flex;
  align-items: flex-start;
  height: 33px;
  padding-left: 2px;
  background-color: #f0f0f0;
  border-top: 1px solid #d9d9d9;
}

.msg-tab {
  width: 60px;
  height: 25px;
  padding-top: 3px;
  border: 1px solid #d9d9d9;
  border-top: none;
}

.msg-tab.active {
  width: 101px;
  height: 27px;
  padding-left: 4px;
  background-color: #fff;
}
```
